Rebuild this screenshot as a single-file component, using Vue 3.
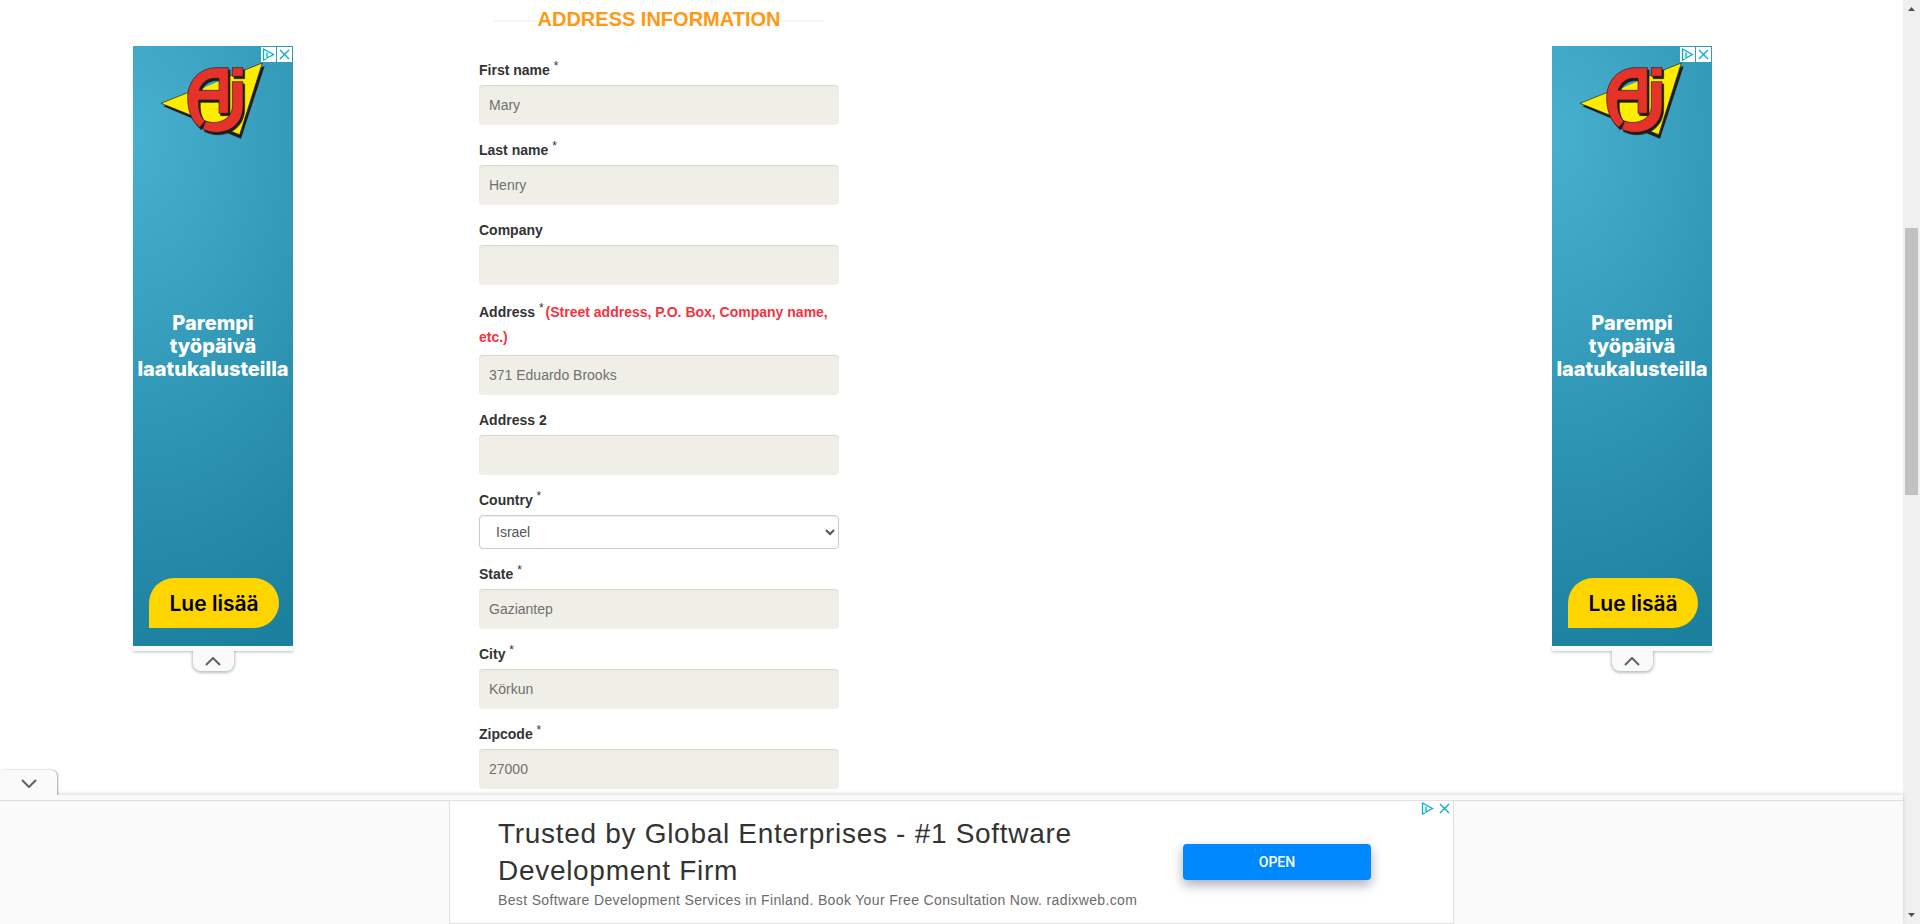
<script setup>
import { reactive } from 'vue'

const fields = reactive([
  { id: 'first', label: 'First name', required: true, value: 'Mary' },
  { id: 'last', label: 'Last name', required: true, value: 'Henry' },
  { id: 'company', label: 'Company', value: '' },
  {
    id: 'address',
    label: 'Address',
    required: true,
    hint: '(Street address, P.O. Box, Company name, etc.)',
    value: '371 Eduardo Brooks',
  },
  { id: 'address2', label: 'Address 2', value: '' },
  { id: 'country', label: 'Country', required: true, options: ['Israel'], value: 'Israel' },
  { id: 'state', label: 'State', required: true, value: 'Gaziantep' },
  { id: 'city', label: 'City', required: true, value: 'Körkun' },
  { id: 'zip', label: 'Zipcode', required: true, value: '27000' },
])
</script>

<template>
  <div class="page">
    <div class="view">
      <main class="content">
        <aside v-for="side in ['left', 'right']" :key="side" class="rail" :class="side">
          <div class="poster">
            <svg class="logo" viewBox="0 0 480 300" aria-hidden="true">
              <path d="M91 181 L395 60 L324 278 Z" fill="#1d1d1b" />
              <path d="M84 172 L388 51 L320 266 Z" fill="#ffed00" stroke="#1d1d1b" stroke-width="2" />
              <path d="M258 97 H240 C220 99 204 113 199 133 H258 Z" fill="#3ba2c2" />
              <path d="M258 106 L206 128 L199 133 H258 Z" fill="#ffed00" />
              <g fill="#1d1d1b" stroke="#1d1d1b" stroke-width="2" transform="translate(5 7)">
                <path
                  fill-rule="evenodd"
                  d="M286 65 H246 C199 68 164 104 164 155 C164 193 175 224 200 244 L216 226 C201 211 195 190 197 162 H258 V202 H286 Z M258 97 H240 C220 99 204 113 199 133 H258 Z"
                />
                <path d="M298 65 H330 V91 H298 Z" />
                <path d="M298 107 H330 V180 C330 232 292 260 246 259 C232 258 220 255 209 249 L218 225 C252 238 298 222 298 180 Z" />
              </g>
              <g fill="#e6332a" stroke="#1d1d1b" stroke-width="2">
                <path
                  fill-rule="evenodd"
                  d="M286 65 H246 C199 68 164 104 164 155 C164 193 175 224 200 244 L216 226 C201 211 195 190 197 162 H258 V202 H286 Z M258 97 H240 C220 99 204 113 199 133 H258 Z"
                />
                <path d="M298 65 H330 V91 H298 Z" />
                <path d="M298 107 H330 V180 C330 232 292 260 246 259 C232 258 220 255 209 249 L218 225 C252 238 298 222 298 180 Z" />
              </g>
            </svg>
            <div class="marks boxed">
              <button type="button" aria-label="Ad choices">
                <svg viewBox="0 0 15 15"><path d="M5 12 L2.500 13 V2 L12.500 7.500 L6 11 V5.500" /></svg>
              </button>
              <button type="button" aria-label="Close ad">
                <svg viewBox="0 0 15 15"><path d="M3 3 L12 12 M12 3 L3 12" /></svg>
              </button>
            </div>
            <p class="slogan">Parempi<br />työpäivä<br />laatukalusteilla</p>
            <a class="more" href="#">Lue lisää</a>
          </div>
          <div class="strip"></div>
          <button class="fold" type="button" aria-label="Collapse ad">
            <svg viewBox="0 0 16 9"><path d="M1 8 L8 1 L15 8" /></svg>
          </button>
        </aside>

        <form class="form" @submit.prevent>
          <h3 class="title"><span>ADDRESS INFORMATION</span></h3>
          <div v-for="f in fields" :key="f.id" class="field">
            <label :for="f.id" :class="{ tall: f.hint }">
              {{ f.label }} <sup v-if="f.required">*</sup>
              <span v-if="f.hint" class="hint">{{ f.hint }}</span>
            </label>
            <select v-if="f.options" :id="f.id" v-model="f.value">
              <option v-for="o in f.options" :key="o">{{ o }}</option>
            </select>
            <input v-else :id="f.id" v-model="f.value" type="text" />
          </div>
        </form>
      </main>

      <footer class="anchor">
        <button class="tab" type="button" aria-label="Hide ad">
          <svg viewBox="0 0 16 9"><path d="M1 1 L8 8 L15 1" /></svg>
        </button>
        <div class="edge"></div>
        <div class="banner">
          <div class="copy">
            <h2>Trusted by Global Enterprises - #1 Software Development Firm</h2>
            <p>Best Software Development Services in Finland. Book Your Free Consultation Now. radixweb.com</p>
          </div>
          <button class="open" type="button">OPEN</button>
          <div class="marks">
            <button type="button" aria-label="Ad choices">
              <svg viewBox="0 0 15 15"><path d="M5 12 L2.500 13 V2 L12.500 7.500 L6 11 V5.500" /></svg>
            </button>
            <button type="button" aria-label="Close ad">
              <svg viewBox="0 0 15 15"><path d="M3 3 L12 12 M12 3 L3 12" /></svg>
            </button>
          </div>
        </div>
      </footer>
    </div>

    <div class="scroll" aria-hidden="true">
      <svg viewBox="0 0 7 4"><path d="M0 4 L3.500 0 L7 4 Z" /></svg>
      <div class="track"><div class="thumb"></div></div>
      <svg viewBox="0 0 7 4"><path d="M0 0 L3.500 4 L7 0 Z" /></svg>
    </div>
  </div>
</template>

<style>
body {
  overflow: hidden;
}
</style>

<style scoped>
* {
  box-sizing: border-box;
}
.page {
  display: flex;
  height: 100vh;
  background: #fff;
  color: #333;
  font: 14px/20px 'Liberation Sans', Arial, sans-serif;
}
button {
  border: 0;
  padding: 0;
  background: none;
  font: inherit;
  cursor: pointer;
}
.view {
  flex: 1;
  min-width: 0;
  display: flex;
  flex-direction: column;
}
.content {
  flex: 1;
  min-height: 0;
  overflow: hidden;
  display: grid;
  grid-template-columns: 160px 186px 360px 1fr 160px;
  align-items: start;
  padding: 0 191px 0 133px;
}

/* side posters */
.rail {
  grid-row: 1;
  margin-top: 46px;
  display: flex;
  flex-direction: column;
  align-items: center;
}
.left {
  grid-column: 1;
}
.right {
  grid-column: 5;
}
.poster {
  position: relative;
  width: 160px;
  height: 600px;
  display: flex;
  flex-direction: column;
  align-items: center;
  background: radial-gradient(ellipse 360px 540px at 0 90px, #48b0cf, #1b7f9e);
}
.logo {
  width: 160px;
  height: 100px;
}
.marks {
  position: absolute;
  top: 1px;
  right: 1px;
  display: flex;
  gap: 1px;
}
.marks button {
  width: 15px;
  height: 15px;
}
.marks svg {
  display: block;
  width: 15px;
  height: 15px;
  fill: none;
  stroke: #00aecd;
  stroke-width: 1.3;
}
.boxed button {
  background: #fff;
}
.slogan {
  margin: 166px 0 0;
  color: #fff;
  font: 800 20px/23px Inter, sans-serif;
  text-align: center;
}
.more {
  margin: auto 14px 18px 16px;
  padding-top: 2px;
  align-self: stretch;
  border-radius: 25px 25px 25px 0;
  background: #ffd500;
  color: #000;
  font: 600 21px/48px Inter, sans-serif;
  text-align: center;
  text-decoration: none;
}
.strip {
  width: 100%;
  height: 5px;
  background: #fafafa;
  box-shadow: 0 1px 3px rgba(0, 0, 0, 0.25);
}
.fold {
  position: relative;
  width: 41px;
  height: 20px;
  border-radius: 0 0 8px 8px;
  background: #fafafa;
  box-shadow: 0 1px 3px 1px rgba(0, 0, 0, 0.25);
  clip-path: inset(0 -4px -6px);
}
.fold svg,
.tab svg {
  width: 16px;
  height: 9px;
  fill: none;
  stroke: #616161;
  stroke-width: 2;
}
.fold svg {
  display: block;
  margin: 0 auto;
}

/* form */
.form {
  grid-row: 1;
  grid-column: 3;
}
.title {
  margin: 9px 15px 31px;
  display: grid;
  justify-items: center;
  font-size: 20px;
  line-height: 20px;
  color: #ff9914;
  background: linear-gradient(#f5f5f5, #f5f5f5) 0 11px / 100% 2px no-repeat;
}
.title span {
  background: #fff;
}
.field {
  margin-bottom: 15px;
}
.field label {
  display: block;
  margin-bottom: 5px;
  font-weight: 700;
}
.field label.tall {
  line-height: 25px;
}
sup {
  font-size: 12px;
  font-weight: 400;
  line-height: 0;
  vertical-align: 5px;
}
.hint {
  margin-left: 2px;
  color: #f5333f;
}
.field input,
.field select {
  display: block;
  width: 100%;
  border-radius: 4px;
  font: inherit;
}
.field input {
  height: 40px;
  padding: 0 10px;
  border: 0;
  background: #efefe7;
  color: #707070;
  box-shadow: inset 0 1px 1px rgba(0, 0, 0, 0.1);
}
.field select {
  height: 34px;
  padding: 6px 12px;
  border: 1px solid #ccc;
  background: #fff;
  color: #555;
  box-shadow: inset 0 1px 1px rgba(0, 0, 0, 0.075);
}

/* bottom ad */
.anchor {
  position: relative;
  background: #fafafa;
  box-shadow: 0 -1px 4px rgba(0, 0, 0, 0.16);
}
.tab {
  position: absolute;
  left: 0;
  bottom: 100%;
  width: 57px;
  height: 25px;
  border-radius: 4px 6px 0 0;
  background: #fafafa;
  box-shadow: 1px 0 2px rgba(0, 0, 0, 0.35);
  clip-path: inset(-4px -4px 0 0);
}
.edge {
  height: 5px;
  background: #fafafa;
  box-shadow: 0 1px 1px rgba(0, 0, 0, 0.1);
}
.banner {
  position: relative;
  max-width: 1005px;
  margin: 0 auto;
  padding: 14px 82px 12px 48px;
  display: flex;
  justify-content: space-between;
  border: 1px solid #e0e0e0;
  background: #fff;
}
.copy {
  width: 660px;
}
.copy h2 {
  margin: 0;
  font-size: 28px;
  font-weight: 400;
  line-height: 37px;
  letter-spacing: 0.025em;
}
.copy p {
  margin: 0;
  color: #6b6b6b;
  font-size: 14px;
  line-height: 22px;
  letter-spacing: 0.025em;
}
.banner .open {
  width: 188px;
  height: 36px;
  margin-top: 29px;
  border-radius: 4px;
  background: #0088ff;
  color: #fff;
  font: 500 14px/36px Roboto, sans-serif;
  box-shadow: 0 5px 12px rgba(20, 20, 60, 0.35);
}
.banner .marks {
  top: 0;
  gap: 2px;
}

/* scrollbar */
.scroll {
  width: 17px;
  display: flex;
  flex-direction: column;
  align-items: center;
  padding: 7px 0;
  background: #f0f0f0;
}
.scroll svg {
  width: 7px;
  height: 4px;
  fill: #505050;
}
.track {
  flex: 1;
  width: 13px;
  padding-top: 217px;
}
.thumb {
  height: 39%;
  background: #c1c1c1;
}
</style>
